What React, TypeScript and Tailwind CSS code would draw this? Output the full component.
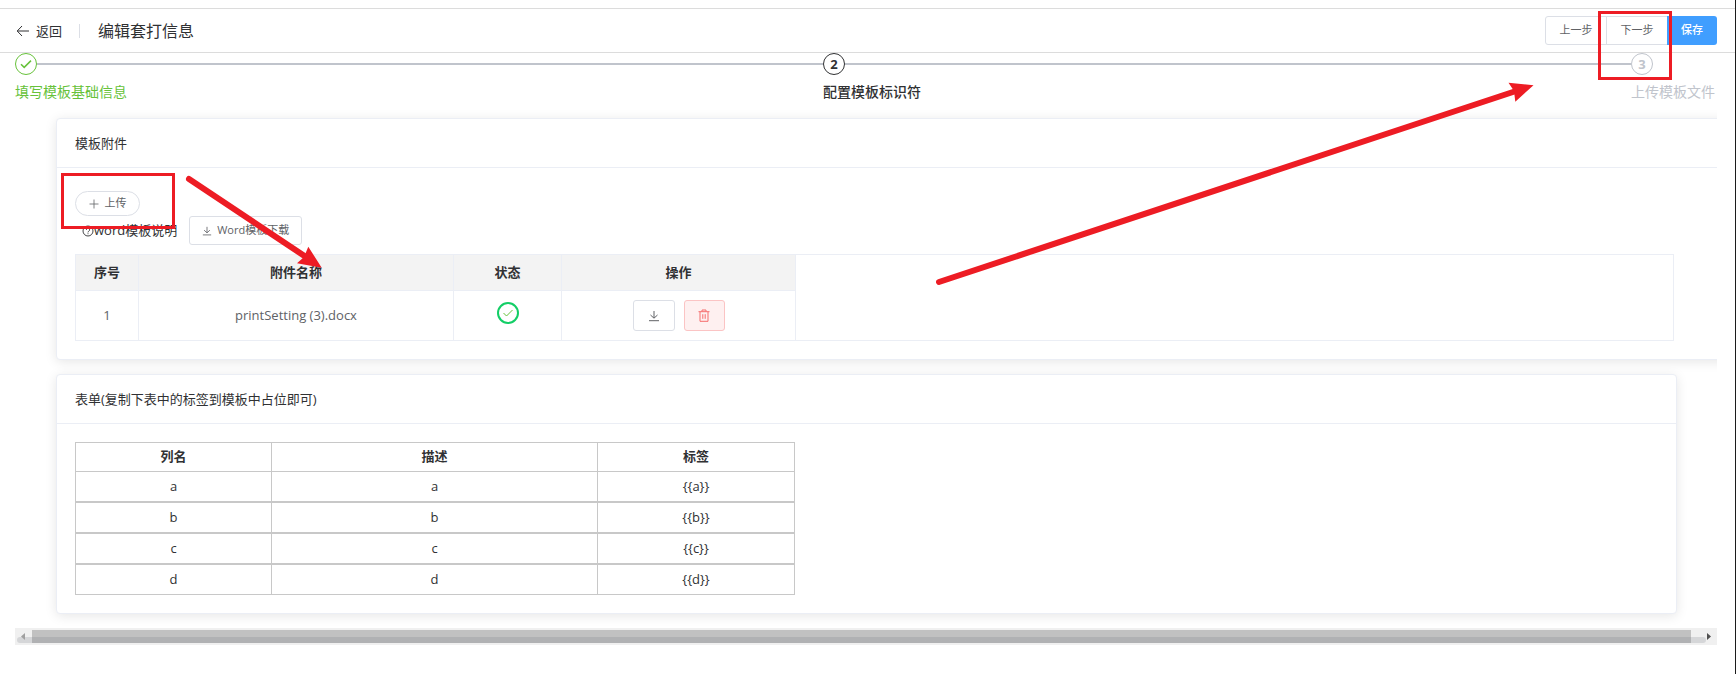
import type { ReactNode } from "react";

const steps = [
  { title: "填写模板基础信息", status: "finish" },
  { title: "配置模板标识符", status: "process" },
  { title: "上传模板文件", status: "wait" },
];

const statusColor: Record<string, string> = {
  finish: "text-[#67c23a] border-[#67c23a]",
  process: "text-[#303133] border-[#303133] font-medium",
  wait: "text-[#c0c4cc] border-[#c0c4cc]",
};

const fields = ["a", "b", "c", "d"];

function DownloadIcon({ className }: { className: string }) {
  return (
    <svg viewBox="0 0 12 12" className={className} fill="none" stroke="currentColor">
      <path d="M6 1v7M2.5 5 6 8.2 9.5 5M1 10.7h10" />
    </svg>
  );
}

function TrashIcon() {
  return (
    <svg viewBox="0 0 12 13" className="h-[13px] w-3" fill="none" stroke="currentColor">
      <path d="M0.5 2.7h11M4 2.5V1h4v1.5M2 3v9.3h8V3M4.8 5.2v4.6M7.2 5.2v4.6" />
    </svg>
  );
}

function Card({ title, className, children }: { title: string; className: string; children: ReactNode }) {
  return (
    <section className={`rounded border border-[#ebeef5] bg-white shadow-[0_2px_12px_rgba(0,0,0,0.1)] ${className}`}>
      <h2 className="border-b border-[#ebeef5] px-[18px] py-[14px] text-[13px] leading-5">{title}</h2>
      {children}
    </section>
  );
}

export default function App() {
  return (
    <div className="relative min-h-screen overflow-hidden border-r border-[#1c1c1c] bg-white pt-2 font-['Open_Sans','Noto_Sans_CJK_SC',sans-serif] text-[13px] text-[#303133]">
      {/* Header */}
      <header className="flex h-[45px] items-center border-y border-[#dcdcdc] pr-[18px] pl-4">
        <button className="flex items-center gap-[6px] leading-5">
          <svg viewBox="0 0 14 14" className="h-[14px] w-[14px]" fill="none" stroke="currentColor">
            <path d="M13 7H1.5M6 2 1.2 7 6 12" />
          </svg>
          返回
        </button>
        <div className="ml-[17px] h-[14px] w-px bg-[#dcdfe6]" />
        <h1 className="ml-[18px] text-[16px] leading-6">编辑套打信息</h1>
        <div className="ml-auto flex text-[11px] text-[#606266]">
          <button className="h-[29px] w-[62px] rounded-l-[3px] border border-[#dcdfe6]">上一步</button>
          <button className="-ml-px h-[29px] w-[62px] border border-[#dcdfe6]">下一步</button>
          <button className="-ml-px h-[29px] w-[50px] rounded-r-[3px] bg-[#409eff] font-medium text-white">保存</button>
        </div>
      </header>

      {/* Steps */}
      <ol className="mr-[18px] ml-[15px] flex">
        {steps.map((step, i) => (
          <li key={step.title} className={i < 2 ? "flex-1" : "w-[86px]"}>
            <div className="flex items-center">
              <span className={`flex h-[22px] w-[22px] items-center justify-center rounded-full border text-[13px] leading-none ${statusColor[step.status]}`}>
                {step.status === "finish" ? (
                  <svg viewBox="0 0 12 10" className="h-[10px] w-3" fill="none" stroke="currentColor" strokeWidth="1.5">
                    <path d="M1 5.2 4.2 8.4 11 1.6" />
                  </svg>
                ) : (
                  <b>{i + 1}</b>
                )}
              </span>
              {i < 2 && <span className="h-[2px] flex-1 bg-[#c0c4cc]" />}
            </div>
            <p className={`mt-[5px] text-[14px] leading-6 whitespace-nowrap ${statusColor[step.status]}`}>{step.title}</p>
          </li>
        ))}
      </ol>

      {/* Scroll area */}
      <div className="mr-[18px] ml-[15px] overflow-hidden pt-[14px] pb-[14px] pl-[41px]">
        <Card title="模板附件" className="-mr-6">
          <div className="mr-[66px] ml-[18px] pt-[23px] pb-[18px]">
            <button className="flex h-[25px] w-[65px] items-center justify-center gap-[6px] rounded-full border border-[#dcdfe6] text-[11px] text-[#606266]">
              <svg viewBox="0 0 10 10" className="h-[10px] w-[10px]" fill="none" stroke="currentColor" strokeWidth="0.8">
                <path d="M5 0.5v9M0.5 5h9" />
              </svg>
              上传
            </button>
            <div className="flex items-center pl-[7px]">
              <svg viewBox="0 0 12 12" className="h-3 w-3" fill="none" stroke="currentColor" strokeWidth="0.9">
                <circle cx="6" cy="6" r="5" />
                <path d="M4.4 4.8a1.6 1.6 0 1 1 2.4 1.4Q6 6.6 6 7.4M6 8.3v.9" />
              </svg>
              <span>word模板说明</span>
              <button className="ml-3 flex h-[29px] w-[113px] items-center justify-center gap-[5px] rounded-[3px] border border-[#dcdfe6] text-[11px] text-[#606266]">
                <DownloadIcon className="h-[10px] w-[10px]" />
                Word模板下载
              </button>
            </div>
            <div className="mt-[9px] border border-[#ebeef5]">
              <table className="w-[720px] table-fixed border-separate border-spacing-0 text-center">
                <colgroup>
                  <col className="w-[63px]" />
                  <col className="w-[315px]" />
                  <col className="w-[108px]" />
                  <col className="w-[234px]" />
                </colgroup>
                <thead>
                  <tr className="h-9 bg-[#f3f3f3]">
                    {["序号", "附件名称", "状态", "操作"].map((name) => (
                      <th key={name} className="border-r border-b border-[#ebeef5] font-bold">{name}</th>
                    ))}
                  </tr>
                </thead>
                <tbody>
                  <tr className="h-[49px] text-[#606266]">
                    <td className="border-r border-[#ebeef5]">1</td>
                    <td className="border-r border-[#ebeef5]">printSetting (3).docx</td>
                    <td className="border-r border-[#ebeef5] pb-[5px]">
                      <span className="mx-auto flex h-[22px] w-[22px] items-center justify-center rounded-full border-2 border-[#13ce66]">
                        <svg viewBox="0 0 10 8" className="h-2 w-[10px]" fill="none" stroke="#67c23a">
                          <path d="M0.5 4 3.5 7 9.5 1" />
                        </svg>
                      </span>
                    </td>
                    <td className="border-r border-[#ebeef5]">
                      <div className="flex justify-center gap-[9px]">
                        <button aria-label="下载" className="flex h-[31px] w-[42px] items-center justify-center rounded-[3px] border border-[#dcdfe6]">
                          <DownloadIcon className="h-3 w-3" />
                        </button>
                        <button aria-label="删除" className="flex h-[31px] w-[41px] items-center justify-center rounded-[3px] border border-[#fbc4c4] bg-[#fef0f0] text-[#f56c6c]">
                          <TrashIcon />
                        </button>
                      </div>
                    </td>
                  </tr>
                </tbody>
              </table>
            </div>
          </div>
        </Card>

        <Card title="表单(复制下表中的标签到模板中占位即可)" className="mt-[14px] mr-10">
          <div className="p-[18px]">
            <table className="w-[720px] table-fixed border-separate border-spacing-0 border-l border-[#c8c8c8] text-center">
              <colgroup>
                <col className="w-[196px]" />
                <col className="w-[326px]" />
                <col className="w-[197px]" />
              </colgroup>
              <thead>
                <tr className="h-[30px]">
                  {["列名", "描述", "标签"].map((name) => (
                    <th key={name} className="border-t border-r border-b border-[#c8c8c8] font-bold">{name}</th>
                  ))}
                </tr>
              </thead>
              <tbody>
                {fields.map((field) => (
                  <tr key={field} className="h-[31px] first:h-[30px] *:border-t *:border-r *:border-b *:border-[#c8c8c8] first:*:border-t-0">
                    <td>{field}</td>
                    <td>{field}</td>
                    <td>{`{{${field}}}`}</td>
                  </tr>
                ))}
              </tbody>
            </table>
          </div>
        </Card>
      </div>

      {/* Horizontal scrollbar */}
      <div className="mr-[18px] ml-[15px] flex h-[17px] items-center bg-[#f0f0f0]">
        <svg viewBox="0 0 17 17" className="h-[17px] w-[17px]">
          <path d="M2 12a3 3 0 0 1 3-3h12v6H5a3 3 0 0 1-3-3z" fill="#d5d6d8" />
          <path d="M10 5v7L6 8.5z" fill="#a0a0a0" />
        </svg>
        <div className="h-[13px] flex-1 bg-linear-to-b from-[#c1c1c1] from-54% to-[#b0b1b3] to-54%" />
        <svg viewBox="0 0 26 17" className="h-[17px] w-[26px]">
          <path d="M0 9h12a3 3 0 0 1 0 6H0z" fill="#d5d6d8" />
          <path d="M16 5v7l4-3.5z" fill="#505050" />
        </svg>
      </div>

      {/* Annotations */}
      <svg viewBox="0 0 1736 674" className="pointer-events-none absolute top-0 left-0 h-[674px] w-[1736px]" fill="none" stroke="#ed1c24">
        <rect x="62.5" y="174.5" width="111" height="53" strokeWidth="3" />
        <rect x="1599.5" y="12.5" width="71" height="66" strokeWidth="3" />
        <g strokeWidth="6" strokeLinecap="round">
          <path d="M189 179 306 257" />
          <path d="M939 282 1516 91" />
        </g>
        <g fill="#ed1c24" stroke="none">
          <path d="M321.7 267.7 308.3 246.7 304 257 297 263.3z" />
          <path d="M1533.5 85.3 1508.5 82.7 1514 91 1515.3 101.7z" />
        </g>
      </svg>
    </div>
  );
}
